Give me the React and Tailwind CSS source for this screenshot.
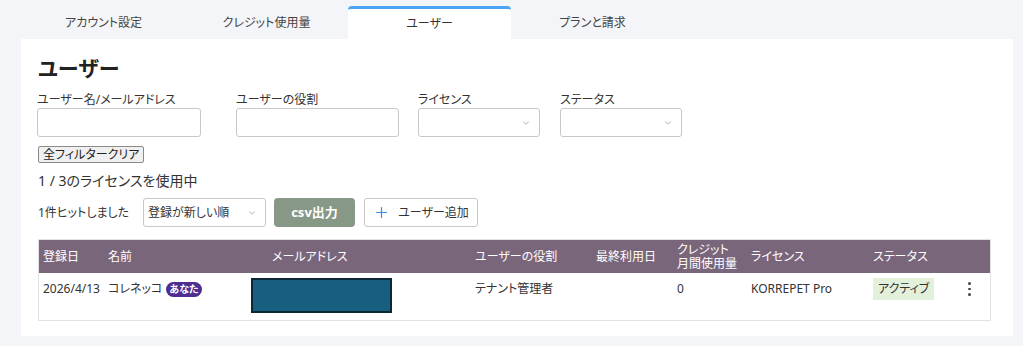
import React from 'react';
import { Plus, ChevronDown } from 'lucide-react';

const tabs = ['アカウント設定', 'クレジット使用量', 'ユーザー', 'プランと請求'];

const Chevron = () => (
    <ChevronDown size={10} className="absolute right-[8px] top-1/2 -translate-y-1/2 text-gray-400" />
);

const Field = ({ label, width, select }) => (
    <div className="flex flex-col" style={{ width }}>
        <label className="text-[12px] leading-[17px] text-[#333]">{label}</label>
        <div className="relative h-[29px] border border-[#c8c8c8] rounded-[3px] bg-white">
            {select && <Chevron />}
        </div>
    </div>
);

const columns = [
    { label: '登録日', w: 'w-[65px]' },
    { label: '名前', w: 'w-[143px]' },
    { label: 'メールアドレス', w: 'w-[224px] pl-[21px]' },
    { label: 'ユーザーの役割', w: 'w-[121px]' },
    { label: '最終利用日', w: 'w-[81px]' },
    { label: 'クレジット\n月間使用量', w: 'w-[74px]' },
    { label: 'ライセンス', w: 'w-[122px]' },
    { label: 'ステータス', w: 'w-[94px]' },
];

export default function App() {
    return (
        <div
            className="h-[346px] w-[1023px] bg-[#f4f5f9] pt-[6px] pl-[21px] pr-[10px] overflow-hidden text-[#333] [font-feature-settings:'palt']"
            style={{ fontFamily: '"Noto Sans", "Noto Sans CJK JP", sans-serif' }}
        >
            {/* Tabs */}
            <div className="flex pl-[1px]">
                {tabs.map((t, i) => (
                    <div
                        key={t}
                        className={`w-[163px] h-[33px] flex items-center justify-center text-[12px] ${
                            i === 2 ? 'bg-white border-t-[3px] border-[#4aa3f3] rounded-t-[4px] pb-[1px]' : 'text-[#444]'
                        }`}
                    >
                        {t}
                    </div>
                ))}
            </div>

            {/* Card */}
            <div className="bg-white w-[992px] h-[297px] pl-[16px] pr-[21px] pt-[14px]">
                <h1 className="text-[21px] leading-[30px] font-bold text-[#222] pl-[1px]">ユーザー</h1>

                <div className="flex mt-[8px]">
                    <Field label="ユーザー名/メールアドレス" width="164px" />
                    <div className="ml-[35px]">
                        <Field label="ユーザーの役割" width="163px" />
                    </div>
                    <div className="flex gap-[20px] ml-[19px]">
                        <Field label="ライセンス" width="122px" select />
                        <Field label="ステータス" width="122px" select />
                    </div>
                </div>

                <button className="mt-[9px] ml-[1px] px-[4px] h-[17px] flex items-center text-[12px] leading-none border border-[#8a8a8a] rounded-[2px] bg-[#f0f0f0] text-[#222]">
                    全フィルタークリア
                </button>

                <div className="mt-[8px] pl-[1px] text-[14px] leading-[20px] text-[#333]">1 / 3のライセンスを使用中</div>

                <div className="flex items-center mt-[7px] pl-[1px]">
                    <span className="text-[12px] text-[#333] w-[105px]">1件ヒットしました</span>
                    <div className="relative w-[123px] h-[29px] border border-[#c8c8c8] rounded-[3px] flex items-center pl-[4px] text-[12px] text-[#333]">
                        登録が新しい順
                        <Chevron />
                    </div>
                    <button className="ml-[8px] w-[81px] h-[29px] rounded-[4px] bg-[#889887] text-white text-[13px] font-bold">
                        csv出力
                    </button>
                    <button className="ml-[9px] w-[114px] h-[29px] rounded-[3px] border border-[#c8c8c8] bg-white flex items-center justify-center gap-[8px] text-[12px] text-[#333]">
                        <Plus size={17} strokeWidth={1.75} className="text-[#3a8ee6]" />
                        ユーザー追加
                    </button>
                </div>

                {/* Table */}
                <div className="mt-[12px] ml-[1px] w-[953px] border border-[#e3e3e3]">
                    <div className="flex items-center h-[33px] bg-[#7a667b] text-white text-[12px] pl-[4px]">
                        {columns.map((c) => (
                            <div key={c.label} className={`${c.w} whitespace-pre-line leading-[14px]`}>
                                {c.label}
                            </div>
                        ))}
                    </div>
                    <div className="flex h-[47px] pl-[4px] pt-[5px] text-[12px] text-[#333]">
                        <div className="w-[65px] leading-[22px]">2026/4/13</div>
                        <div className="w-[143px] flex items-start gap-[4px] leading-[22px]">
                            コレネッコ
                            <span className="mt-[4px] h-[15px] px-[3px] rounded-full bg-[#4d2d8f] text-white text-[10px] leading-[15px] font-bold">
                                あなた
                            </span>
                        </div>
                        <div className="w-[224px]">
                            <div className="w-[141px] h-[35px] bg-[#175f81] border-2 border-[#0c2633]" />
                        </div>
                        <div className="w-[121px] leading-[22px]">テナント管理者</div>
                        <div className="w-[81px]" />
                        <div className="w-[74px] leading-[22px]">0</div>
                        <div className="w-[122px] leading-[22px]">KORREPET Pro</div>
                        <div className="w-[94px]">
                            <span className="inline-block h-[22px] px-[5px] bg-[#e3f0da] leading-[22px]">アクティブ</span>
                        </div>
                        <div className="flex flex-col gap-[3px] pt-[4px] pl-[1px]">
                            <span className="w-[2.5px] h-[2.5px] rounded-full bg-[#444]" />
                            <span className="w-[2.5px] h-[2.5px] rounded-full bg-[#444]" />
                            <span className="w-[2.5px] h-[2.5px] rounded-full bg-[#444]" />
                        </div>
                    </div>
                </div>
            </div>
        </div>
    );
}
